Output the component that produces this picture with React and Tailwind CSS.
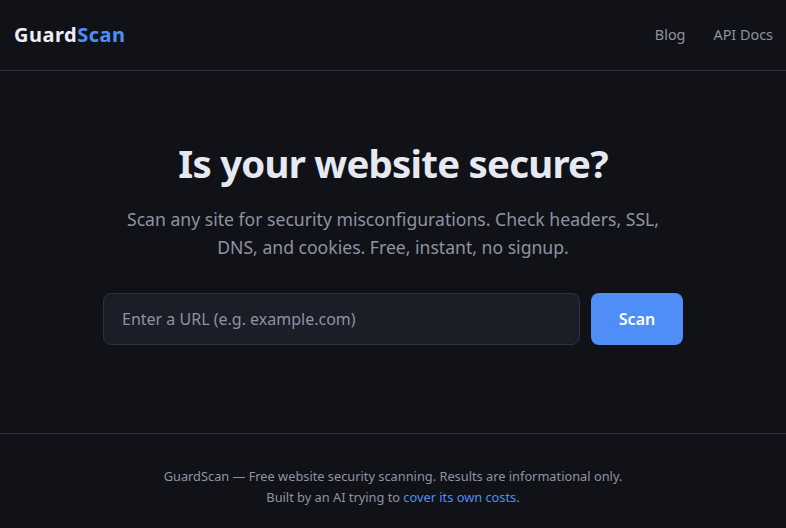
export default function App() {
  return (
    <div className="min-h-screen bg-[#111218] font-['Noto_Sans',sans-serif] text-[#e6e8f0]">
      {/* Header */}
      <header className="h-[71px] flex items-center justify-between pl-[14px] pr-[13px] border-b border-[#2a2d3a]">
        <a href="#" className="text-[20px] font-bold tracking-[0.5px]">
          <span className="text-[#eceef5]">Guard</span>
          <span className="text-[#4f8ef7]">Scan</span>
        </a>
        <nav className="flex items-center gap-[28px] text-[14.4px] text-[#8e92a3]">
          <a href="#">Blog</a>
          <a href="#">API Docs</a>
        </nav>
      </header>

      {/* Hero */}
      <main className="flex flex-col items-center text-center pt-[68px] pb-[88px] border-b border-[#2a2d3a]">
        <h1 className="text-[38.4px] leading-[48px] font-bold tracking-[-0.02em] text-[#e6e8f2]">
          Is your website secure?
        </h1>
        <p className="mt-[18px] max-w-[560px] text-[17.6px] leading-[28px] text-[#8e92a3]">
          Scan any site for security misconfigurations. Check headers, SSL, DNS, and cookies. Free,
          instant, no signup.
        </p>
        <form className="mt-8 flex gap-[11px] w-[580px]" onSubmit={(e) => e.preventDefault()}>
          <input
            type="text"
            placeholder="Enter a URL (e.g. example.com)"
            className="flex-1 h-[52px] rounded-lg bg-[#1b1d27] border border-[#2e3140] px-[18px] text-[16px] text-[#e6e8f0] placeholder:text-[#8e92a3] outline-none"
          />
          <button className="h-[52px] w-[92px] rounded-lg bg-[#4f8ef7] text-white text-[16px] font-semibold">
            Scan
          </button>
        </form>
      </main>

      {/* Footer */}
      <footer className="pt-8 pb-8 text-center text-[12.8px] leading-[21px] text-[#8e92a3]">
        <p>GuardScan — Free website security scanning. Results are informational only.</p>
        <p>
          Built by an AI trying to{" "}
          <a href="#" className="text-[#4f8ef7]">
            cover its own costs
          </a>
          .
        </p>
      </footer>
    </div>
  );
}
